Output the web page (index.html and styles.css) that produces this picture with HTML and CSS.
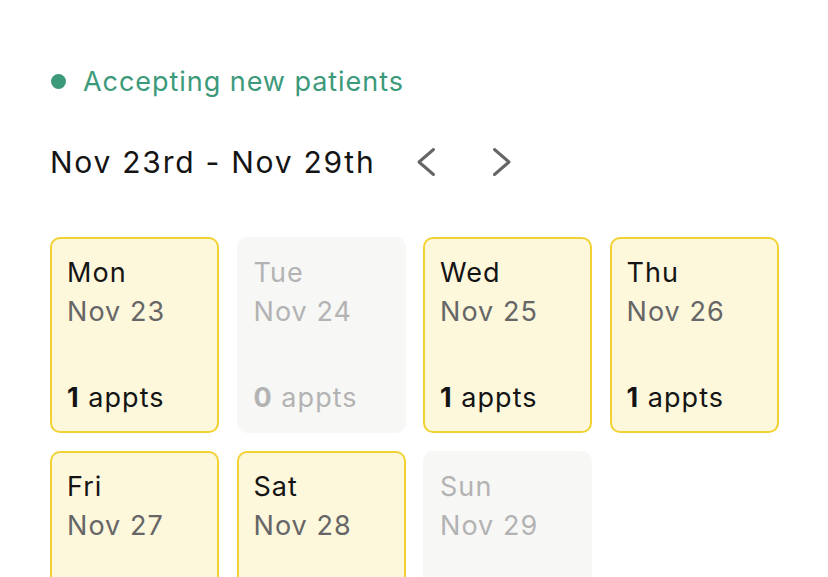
FILE: index.html
```html
<!DOCTYPE html>
<html>
<head>
<meta charset="utf-8">
<link rel="stylesheet" href="styles.css">
</head>
<body>
<div class="page">
  <div class="status"><span class="dot"></span><span>Accepting new patients</span></div>
  <div class="header">
    <div class="range">Nov 23rd - Nov 29th</div>
    <div class="nav">
      <button class="navbtn" aria-label="Previous week">
        <svg width="20" height="30" viewBox="0 0 20 30"><path d="M17.5 2.5 L3 15 L17.5 27.5" fill="none" stroke="#666" stroke-width="3" stroke-linecap="round" stroke-linejoin="round"/></svg>
      </button>
      <button class="navbtn" aria-label="Next week">
        <svg width="20" height="30" viewBox="0 0 20 30"><path d="M2.5 2.5 L17 15 L2.5 27.5" fill="none" stroke="#666" stroke-width="3" stroke-linecap="round" stroke-linejoin="round"/></svg>
      </button>
    </div>
  </div>
  <div class="grid">
    <div class="card open"><div><div class="day">Mon</div><div class="date">Nov 23</div></div><div class="count"><b>1</b> appts</div></div>
    <div class="card closed"><div><div class="day">Tue</div><div class="date">Nov 24</div></div><div class="count"><b>0</b> appts</div></div>
    <div class="card open"><div><div class="day">Wed</div><div class="date">Nov 25</div></div><div class="count"><b>1</b> appts</div></div>
    <div class="card open"><div><div class="day">Thu</div><div class="date">Nov 26</div></div><div class="count"><b>1</b> appts</div></div>
    <div class="card open"><div><div class="day">Fri</div><div class="date">Nov 27</div></div><div class="count"><b>1</b> appts</div></div>
    <div class="card open"><div><div class="day">Sat</div><div class="date">Nov 28</div></div><div class="count"><b>1</b> appts</div></div>
    <div class="card closed"><div><div class="day">Sun</div><div class="date">Nov 29</div></div><div class="count"><b>0</b> appts</div></div>
  </div>
</div>
</body>
</html>
```
FILE: styles.css
```css
html, body {
  margin: 0;
  padding: 0;
  background: #ffffff;
}
body {
  font-family: Inter, "Liberation Sans", sans-serif;
  color: #111;
}
.page {
  padding: 63px 50px 0 50px;
}
.status {
  display: flex;
  align-items: center;
  gap: 17px;
  height: 36px;
  color: #3c9a7a;
  font-size: 27px;
  letter-spacing: 0.95px;
}
.dot {
  width: 15px;
  height: 15px;
  border-radius: 50%;
  background: #3c9a7a;
  margin-left: 1px;
}
.header {
  margin-top: 43px;
  display: flex;
  align-items: center;
  height: 40px;
}
.range {
  font-size: 30px;
  letter-spacing: 1.75px;
  color: #141414;
  line-height: 40px;
}
.nav {
  display: flex;
  gap: 36px;
  margin-left: 31px;
}
.navbtn {
  width: 40px;
  height: 40px;
  padding: 0;
  border: none;
  background: none;
  display: flex;
  align-items: center;
  justify-content: center;
}
.grid {
  margin-top: 55px;
  display: grid;
  grid-template-columns: repeat(4, 169px);
  column-gap: 17.5px;
  row-gap: 18px;
}
.card {
  box-sizing: border-box;
  height: 196px;
  border-radius: 10px;
  padding: 13.5px 15px 14.5px 15px;
  display: flex;
  flex-direction: column;
  justify-content: space-between;
  font-size: 27px;
  line-height: 39px;
  letter-spacing: 1.05px;
}
.card.open {
  background: #fdf7dc;
  border: 2px solid #f2d233;
}
.card.open .day { color: #141414; }
.card.open .date { color: #666; }
.card.open .count { color: #141414; }
.card.closed {
  background: #f7f7f6;
  border: 2px solid #f7f7f6;
}
.card.closed .day,
.card.closed .date,
.card.closed .count { color: #b3b3b3; }
.count b { font-weight: 700; letter-spacing: 1px; }
```
